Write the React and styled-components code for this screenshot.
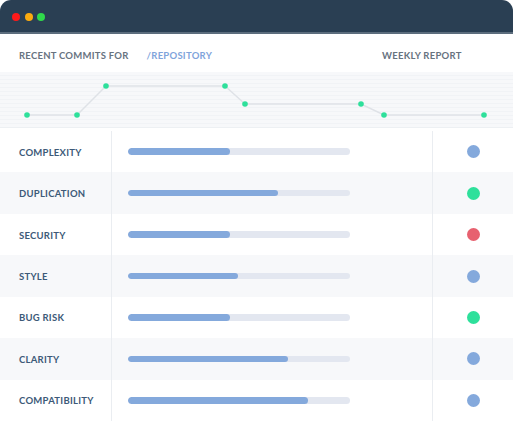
import React from "react";
import styled, { createGlobalStyle } from "styled-components";

const Global = createGlobalStyle`
  html, body { margin: 0; padding: 0; background: #ffffff; }
  body { font-family: "Lato", "Liberation Sans", sans-serif; }
  * { box-sizing: border-box; }
`;

const Window = styled.div`
  width: 513px;
  height: 421px;
  background: #ffffff;
  display: flex;
  flex-direction: column;
  overflow: hidden;
`;

const TitleBar = styled.div`
  height: 34px;
  flex: none;
  background: #2a3f53;
  border-radius: 11px 11px 0 0;
  border-bottom: 2px solid #5c6d7d;
  display: flex;
  align-items: center;
  gap: 4.5px;
  padding: 1px 0 0 12px;
`;

const Light = styled.span`
  width: 8px;
  height: 8px;
  border-radius: 50%;
  background: ${(p) => p.$color};
`;

const Header = styled.div`
  height: 38px;
  flex: none;
  display: flex;
  align-items: center;
  padding: 4px 0 0 19px;
`;

const HeadText = styled.span`
  font-size: 9.5px;
  font-weight: 700;
  letter-spacing: 0.25px;
  color: ${(p) => (p.$accent ? "#7fa4db" : "#67737f")};
  margin-left: ${(p) => p.$gap || 0}px;
`;

const Chart = styled.div`
  height: 56px;
  flex: none;
  background-color: #f7f8fa;
  background-image: repeating-linear-gradient(
    to bottom,
    #f7f8fa 0px,
    #f7f8fa 3px,
    #f1f3f6 3px,
    #f1f3f6 4px
  );
  border-bottom: 1px solid #edf0f3;
  svg { display: block; }
`;

const Table = styled.div`
  flex: 1;
  display: flex;
  flex-direction: column;
  padding-top: 3px;
`;

const Row = styled.div`
  height: 41.45px;
  display: grid;
  grid-template-columns: 111px 1px 320px 1px 1fr;
  align-items: stretch;
  background: ${(p) => (p.$alt ? "#f7f8fa" : "#ffffff")};
`;

const Divider = styled.div`
  background: #eaedf1;
`;

const Label = styled.div`
  display: flex;
  align-items: center;
  padding: 1px 0 0 19px;
  font-size: 9.5px;
  font-weight: 700;
  letter-spacing: 0.25px;
  color: #3d5a78;
`;

const BarCell = styled.div`
  display: flex;
  align-items: center;
  padding-left: 16px;
`;

const Track = styled.div`
  width: 222px;
  height: 6.5px;
  border-radius: 4px;
  background: #e3e7f0;
  overflow: hidden;
`;

const Fill = styled.div`
  height: 100%;
  border-radius: 4px;
  background: #84a9dc;
`;

const StatusCell = styled.div`
  display: flex;
  align-items: center;
  justify-content: center;
`;

const Dot = styled.span`
  width: 13px;
  height: 13px;
  border-radius: 50%;
  background: ${(p) => p.$color};
`;

const BLUE = "#84a9dc";
const GREEN = "#2ee09b";
const RED = "#e7616f";

const rows = [
  { name: "COMPLEXITY", fill: 102, color: BLUE },
  { name: "DUPLICATION", fill: 150, color: GREEN },
  { name: "SECURITY", fill: 102, color: RED },
  { name: "STYLE", fill: 110, color: BLUE },
  { name: "BUG RISK", fill: 102, color: GREEN },
  { name: "CLARITY", fill: 160, color: BLUE },
  { name: "COMPATIBILITY", fill: 180, color: BLUE },
];

const points = [
  [27, 43],
  [77, 43],
  [106, 14],
  [225, 14],
  [245, 32],
  [361, 32],
  [384, 43],
  [484, 43],
];

function CommitChart() {
  const d = points.map((p, i) => `${i ? "L" : "M"}${p[0]} ${p[1]}`).join(" ");
  return (
    <svg width="513" height="55" viewBox="0 0 513 55">
      <path d={d} fill="none" stroke="#dfe2e7" strokeWidth="1.4" />
      {points.map((p, i) => (
        <circle key={i} cx={p[0]} cy={p[1]} r="2.8" fill="#2ee09b" />
      ))}
    </svg>
  );
}

export default function App() {
  return (
    <>
      <Global />
      <Window>
        <TitleBar>
          <Light $color="#fe1a1a" />
          <Light $color="#fbab0f" />
          <Light $color="#2fd94b" />
        </TitleBar>
        <Header>
          <HeadText>RECENT COMMITS FOR</HeadText>
          <HeadText $accent $gap={18}>/REPOSITORY</HeadText>
          <HeadText $gap={170}>WEEKLY REPORT</HeadText>
        </Header>
        <Chart>
          <CommitChart />
        </Chart>
        <Table>
          {rows.map((r, i) => (
            <Row key={r.name} $alt={i % 2 === 1}>
              <Label>{r.name}</Label>
              <Divider />
              <BarCell>
                <Track>
                  <Fill style={{ width: `${r.fill}px` }} />
                </Track>
              </BarCell>
              <Divider />
              <StatusCell>
                <Dot $color={r.color} />
              </StatusCell>
            </Row>
          ))}
        </Table>
      </Window>
    </>
  );
}
